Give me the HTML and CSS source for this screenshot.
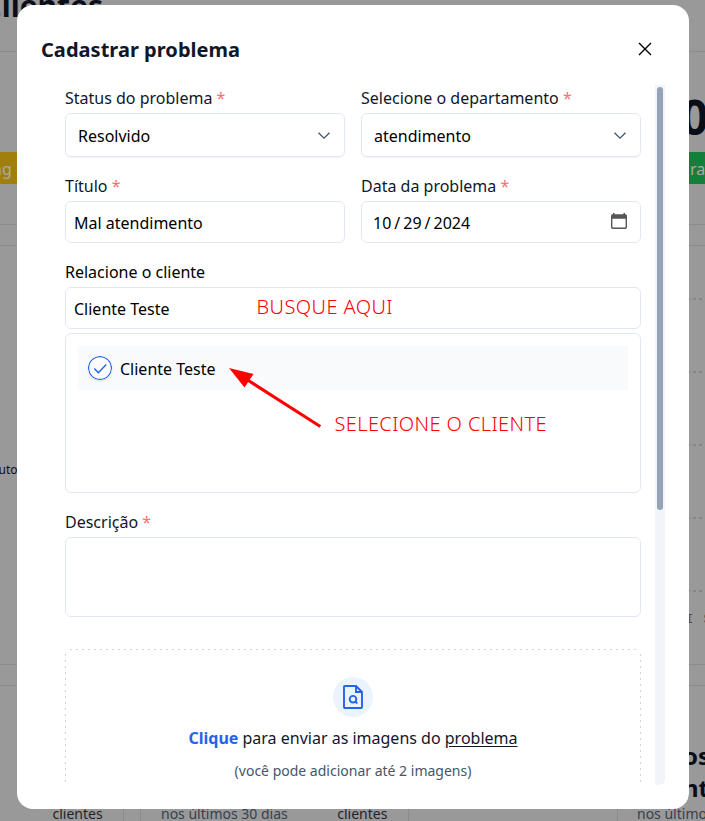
FILE: index.html
```html
<!DOCTYPE html>
<html lang="pt-BR">
<head>
<meta charset="utf-8">
<title>Cadastrar problema</title>
<link rel="stylesheet" href="styles.css">
</head>
<body>
<div class="page">
  <header class="top"><span class="brand">Clientes</span></header>
  <section class="panel summary">
    <div class="tag yellow">ng</div>
    <div class="score"><b>0</b><div class="tag green">ra</div></div>
  </section>
  <section class="panel chart">
    <span class="legend">uto</span>
    <div class="plot"><i></i><i></i><i></i><i></i><i></i><span class="months">I&nbsp;S</span></div>
  </section>
  <section class="stats">
    <div class="stat s1"><span class="dark">clientes</span></div>
    <div class="stat s2"><span>nos últimos 30 dias</span><span class="dark">clientes</span></div>
    <div class="stat s3"><b>os<br>nt</b><span>nos últimos</span></div>
  </section>
</div>
<main class="modal">
  <header class="modal-head">
    <h1>Cadastrar problema</h1>
    <svg class="close" viewBox="0 0 14 14"><path d="M1 1l12 12M13 1L1 13"/></svg>
  </header>
  <div class="scroller">
    <form class="form">
      <div class="pair">
        <div class="field"><label>Status do problema <em>*</em></label>
          <div class="box select"><span>Resolvido</span><svg class="chev" viewBox="0 0 12 7"><path d="M.5.7L6 6.1 11.500.7"/></svg></div></div>
        <div class="field"><label>Selecione o departamento <em>*</em></label>
          <div class="box select"><span>atendimento</span><svg class="chev" viewBox="0 0 12 7"><path d="M.5.7L6 6.1 11.500.7"/></svg></div></div>
      </div>
      <div class="pair second">
        <div class="field"><label>Título <em>*</em></label><div class="box">Mal atendimento</div></div>
        <div class="field"><label>Data da problema <em>*</em></label>
          <div class="box date"><span class="digits"><span>10</span><span>/</span><span>29</span><span>/</span><span>2024</span></span>
            <svg class="cal" viewBox="0 0 16 16"><path fill-rule="evenodd" d="M2 0h1.500v1.300h9V0H14v1.300h.5Q16 1.300 16 3v11.200Q16 16 14.200 16H1.800Q0 16 0 14.200V3Q0 1.300 1.500 1.300H2zM1.400 5.700v7.800q0 1 1 1h11.200q1 0 1-1V5.700z"/></svg></div></div>
      </div>
      <div class="field client"><label class="black">Relacione o cliente</label>
        <div class="box">Cliente Teste</div>
        <div class="results"><div class="result">
          <svg class="check" viewBox="0 0 24 24"><circle cx="12" cy="12" r="11.400"/><path d="M6.300 12.500l4 4.200 8-8.300"/></svg>
          <span>Cliente Teste</span></div></div>
      </div>
      <div class="field desc"><label>Descrição <em>*</em></label><div class="area"></div></div>
      <div class="upload">
        <div class="round"><svg viewBox="0 0 20 24"><path d="M2 1h11l6 6v15q0 1-1 1H2q-1 0-1-1V2q0-1 1-1zM13 1v6h6"/><circle cx="10" cy="14.200" r="3.300"/><path d="M12.300 16.500l2 2"/></svg></div>
        <p><strong>Clique</strong> para enviar as imagens do <u>problema</u></p>
        <small>(você pode adicionar até 2 imagens)</small>
      </div>
    </form>
    <div class="track"><div class="thumb"></div></div>
  </div>
</main>
<svg class="notes" viewBox="0 0 705 821">
  <text x="256.500" y="314" textLength="136">BUSQUE AQUI</text>
  <text x="334.500" y="431" textLength="212">SELECIONE O CLIENTE</text>
  <path class="shaft" d="M246 379L320.300 426.500"/>
  <path class="tip" d="M229 368l24.500 6-9 13.500z"/>
</svg>
</body>
</html>
```
FILE: styles.css
```css
* { box-sizing: border-box; }
body { margin: 0; width: 705px; height: 821px; overflow: hidden; background: #999; font: 16px/24px "Noto Sans", sans-serif; color: #0f172a; }
svg { display: block; flex: none; }
.page { height: 821px; overflow: hidden; color: #090e19; }
.top { height: 51px; overflow: hidden; }
.brand { display: block; margin: -12px 0 0 -17.500px; font-size: 30px; line-height: 36px; font-weight: 700; }
.panel { border: solid #888b90; border-width: 1px 0; display: flex; justify-content: space-between; overflow: hidden; }
.summary { height: 174px; }
.tag { height: 32px; line-height: 34px; color: #aaa9a5; }
.yellow { width: 60px; margin-top: 100px; margin-left: -8px; background: #a17f0d; }
.green { width: 30px; background: #147e3b; padding-left: 1px; }
.score { width: 16px; }
.score b { display: block; height: 100px; padding-top: 37px; margin-left: -8px; font-size: 48px; line-height: 56px; }
.chart { height: 420px; margin-top: 20px; }
.legend { margin-top: 212px; margin-left: -1.500px; font-size: 12px; }
.plot { width: 16px; padding-top: 52px; }
.plot i { display: block; height: 2px; margin-bottom: 71px; background: repeating-linear-gradient(90deg, #858585 0 1px, transparent 1px 4px, #858585 4px 7px, transparent 7px 10px, #858585 10px 13px, transparent 13px 16px); }
.months { display: block; margin-top: -55px; margin-left: -3px; font: 12px/24px "Liberation Mono", monospace; color: #4b4f55; white-space: nowrap; letter-spacing: 1.500px; }
.stats { display: flex; margin-top: 20px; gap: 17px; height: 139px; font-size: 14px; line-height: 20px; color: #37404d; }
.stat { border: solid #888b90; border-width: 1px 1px 0; flex: none; display: flex; align-items: flex-end; }
.dark { color: #1e242e; }
.s1 { width: 124px; border-left: 0; padding-left: 52.500px; }
.s2 { width: 269px; padding-left: 20px; gap: 49.500px; margin-left: -1px; white-space: nowrap; }
.s3 { width: 180px; margin-left: 191px; padding-left: 19px; flex-direction: column; align-items: flex-start; justify-content: flex-end; }
.s3 b { margin-left: 46px; font-size: 24px; line-height: 32px; color: #090e19; }
.modal { position: absolute; left: 17px; top: 5px; width: 672px; height: 804px; padding: 24px; background: #fff; border-radius: 16px; }
.modal-head { display: flex; justify-content: space-between; height: 56px; padding-right: 13px; }
h1 { margin: 5px 0 0; font-size: 20px; line-height: 32px; font-weight: 700; letter-spacing: .03px; }
.close { width: 14px; height: 14px; margin-top: 13px; fill: none; stroke: #000; stroke-width: 1.400; }
.scroller { display: flex; justify-content: space-between; height: 700px; }
.form { width: 600px; height: 698px; padding: 1px 0 0 24px; overflow: hidden; }
.pair { display: grid; grid-template-columns: 280px 280px; gap: 16px; }
.second { margin-top: 17px; }
label { display: block; height: 27px; }
label em { font-style: normal; color: #f87171; }
.black, .box { color: #000; }
.box { height: 42px; padding: 1px 8px 0; border: 1px solid #e2e8f0; border-radius: 6px; line-height: 40px; }
.select { display: flex; align-items: center; justify-content: space-between; height: 44px; padding: 1px 14px 0 12px; box-shadow: 0 1px 2px #0000000d; }
.chev { width: 12px; height: 7px; fill: none; stroke: #475569; stroke-width: 1.300; }
.date { display: flex; justify-content: space-between; padding: 1px 13px 0 11px; }
.digits { display: flex; gap: 3px; }
.cal { width: 16px; height: 16px; margin-top: 10px; fill: #555; }
.client { margin-top: 17px; }
.results { height: 160px; margin-top: 4px; padding: 12px; border: 1px solid #e2e8f0; border-radius: 6px; }
.result { display: flex; align-items: center; gap: 8px; height: 44px; padding-left: 10px; background: #f8fafc; border-radius: 2px; color: #000; }
.result span { padding-top: 2px; }
.check { width: 24px; height: 24px; fill: #fff; stroke: #2563eb; stroke-width: 1.200; border-radius: 50%; box-shadow: 0 1px 2px #0002; }
.check path { fill: none; stroke-width: 1.500; }
.desc { margin-top: 17px; }
.area { height: 80px; border: 1px solid #e2e8f0; border-radius: 6px; }
.upload { height: 180px; margin-top: 32px; padding-top: 28px; text-align: center; border-radius: 6px; background: repeating-linear-gradient(90deg, #cbd5e1 0 2px, transparent 2px 6px) 5px 0 / 566px 1px no-repeat, repeating-linear-gradient(#cbd5e1 0 2px, transparent 2px 6px) 0 5px / 1px 128px no-repeat, repeating-linear-gradient(#cbd5e1 0 2px, transparent 2px 6px) 100% 5px / 1px 128px no-repeat; }
.round { display: grid; place-items: center; width: 40px; height: 40px; margin: 0 auto; border-radius: 50%; background: #ebf4fd; }
.round svg { width: 20px; height: 24px; fill: none; stroke: #2563eb; stroke-width: 1.900; }
.upload p { margin: 9px 0 0; }
.upload strong { color: #2563eb; }
.upload u { text-underline-offset: 2px; }
.upload small { display: block; margin-top: 11px; font-size: 14px; line-height: 20px; color: #475569; }
.track { width: 10px; height: 700px; padding: 2px; background: #f1f5f9; border-radius: 0 0 6px 0; }
.thumb { height: 423px; background: #94a3b8; border-radius: 3px; }
.notes { position: absolute; left: 0; top: 0; width: 705px; height: 821px; pointer-events: none; }
.notes text { font: 350 20px "Noto Sans", sans-serif; fill: #f00; }
.shaft { stroke: #f00; stroke-width: 3; }
.tip { fill: #f00; }
```
